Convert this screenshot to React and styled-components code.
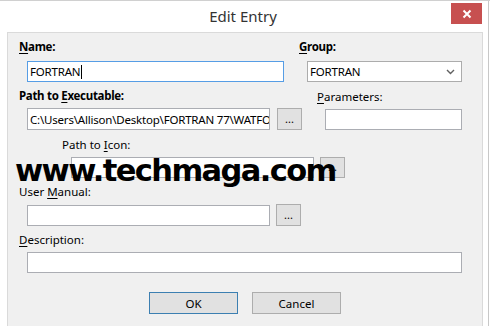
import React from "react";
import styled, { createGlobalStyle } from "styled-components";

const GlobalStyle = createGlobalStyle`
  * { box-sizing: border-box; }
  body {
    margin: 0;
    background: #ffffff;
    font-family: "Noto Sans", "Open Sans", sans-serif;
  }
`;

const Frame = styled.div`
  position: relative;
  width: 490px;
  height: 326px;
  overflow: hidden;
  background: #ffffff;
  border-top: 1px solid #d0d0d0;
`;

const EdgeLine = styled.div`
  position: absolute;
  top: 0;
  right: 1px;
  width: 1px;
  height: 326px;
  background: #c8c8c8;
`;

const TitleBar = styled.div`
  height: 31px;
  display: flex;
  align-items: center;
  justify-content: center;
  font-size: 15px;
  color: #333333;
  padding-bottom: 2px;
  padding-right: 4px;
`;

const CloseButton = styled.div`
  position: absolute;
  top: 2px;
  left: 451px;
  width: 31px;
  height: 21px;
  background: #c75050;
  display: flex;
  align-items: center;
  justify-content: center;
`;

const Panel = styled.div`
  margin-left: 7px;
  width: 476px;
  height: 300px;
  background: #f0f0f0;
  border: 1px solid #dadada;
  padding-left: 11px;
  font-size: 11.5px;
  color: #000;
`;

const Row = styled.div`
  display: flex;
  align-items: flex-start;
  margin-top: ${(p) => p.top || 0}px;
`;

const Column = styled.div`
  display: flex;
  flex-direction: column;
  width: ${(p) => (p.width ? `${p.width}px` : "auto")};
  padding-top: ${(p) => p.pad || 0}px;
`;

const Label = styled.div`
  height: 16px;
  line-height: 16px;
  font-weight: ${(p) => (p.bold ? 700 : 400)};
  margin-left: ${(p) => p.indent || 0}px;
  white-space: nowrap;
  letter-spacing: ${(p) => (p.bold ? "-0.3px" : "0")};
`;

const Key = styled.span`
  text-decoration: underline;
  text-underline-offset: 2px;
`;

const InputLine = styled.div`
  display: flex;
  align-items: flex-start;
  gap: ${(p) => p.gap || 0}px;
  margin-top: ${(p) => p.gap0 || 4}px;
  margin-left: ${(p) => p.indent || 8}px;
`;

const TextBox = styled.div`
  width: ${(p) => p.w}px;
  height: ${(p) => p.h || 21}px;
  background: #ffffff;
  border: 1px solid ${(p) => (p.focus ? "#569de5" : "#abadb3")};
  display: flex;
  align-items: center;
  padding-left: 2px;
  overflow: hidden;
  white-space: nowrap;
  font-size: 11.5px;
  letter-spacing: -0.2px;
`;

const Caret = styled.span`
  display: inline-block;
  width: 1px;
  height: 14px;
  background: #000;
  margin-left: 1px;
`;

const Select = styled(TextBox)`
  justify-content: space-between;
  padding-right: 6px;
  border-color: #acacac;
`;

const Browse = styled.div`
  width: 25px;
  height: ${(p) => p.h || 22}px;
  background: #e1e1e1;
  border: 1px solid #adadad;
  display: flex;
  align-items: center;
  justify-content: center;
  font-size: 11px;
  padding-bottom: 2px;
  margin-top: ${(p) => p.top || 0}px;
`;

const ButtonBar = styled.div`
  display: flex;
  justify-content: center;
  gap: 14px;
  margin-top: 19px;
  margin-left: -11px;
`;

const DialogButton = styled.div`
  width: 89px;
  height: 22px;
  background: #e1e1e1;
  border: 1px solid ${(p) => (p.primary ? "#3c7fb1" : "#adadad")};
  display: flex;
  align-items: center;
  justify-content: center;
  font-size: 11.5px;
`;

const Watermark = styled.div`
  position: absolute;
  left: 15px;
  top: 150px;
  font-family: "DejaVu Sans", Verdana, sans-serif;
  font-weight: 700;
  font-size: 30.5px;
  letter-spacing: -1.6px;
  color: #000;
  line-height: 40px;
  white-space: nowrap;
`;

const Chevron = () => (
  <svg width="9" height="6" viewBox="0 0 9 6">
    <path d="M1 1 L4.5 4.5 L8 1" fill="none" stroke="#606060" strokeWidth="1.4" />
  </svg>
);

const CloseIcon = () => (
  <svg width="10" height="10" viewBox="0 0 10 10">
    <path d="M1.5 1.5 L8.5 8.5 M8.5 1.5 L1.5 8.5" stroke="#fff" strokeWidth="2" />
  </svg>
);

export default function App() {
  return (
    <>
      <GlobalStyle />
      <Frame>
        <TitleBar>Edit Entry</TitleBar>
        <CloseButton>
          <CloseIcon />
        </CloseButton>
        <EdgeLine />
        <Panel>
          <Row top={6}>
            <Column width={280}>
              <Label bold>
                <Key>N</Key>ame:
              </Label>
              <InputLine gap0={6}>
                <TextBox w={257} h={21} focus>
                  FORTRAN
                  <Caret />
                </TextBox>
              </InputLine>
            </Column>
            <Column>
              <Label bold>
                <Key>G</Key>roup:
              </Label>
              <InputLine gap0={6}>
                <Select w={155} h={21}>
                  FORTRAN
                  <Chevron />
                </Select>
              </InputLine>
            </Column>
          </Row>

          <Row top={6}>
            <Column width={298}>
              <Label bold>
                Path to <Key>E</Key>xecutable:
              </Label>
              <InputLine gap={7}>
                <TextBox w={243} h={22}>
                  C:\Users\Allison\Desktop\FORTRAN 77\WATFOR77
                </TextBox>
                <Browse>...</Browse>
              </InputLine>
            </Column>
            <Column pad={1}>
              <Label>
                <Key>P</Key>arameters:
              </Label>
              <InputLine gap0={4}>
                <TextBox w={137} h={21} />
              </InputLine>
            </Column>
          </Row>

          <Row top={7}>
            <Column>
              <Label indent={43}>
                Path to <Key>I</Key>con:
              </Label>
              <InputLine gap={6} indent={52}>
                <TextBox w={243} h={21} />
                <Browse h={21}>...</Browse>
              </InputLine>
            </Column>
          </Row>

          <Row top={6}>
            <Column>
              <Label>
                User <Key>M</Key>anual:
              </Label>
              <InputLine gap={6} gap0={5}>
                <TextBox w={243} h={21} />
                <Browse h={22} top={-1}>
                  ...
                </Browse>
              </InputLine>
            </Column>
          </Row>

          <Row top={6}>
            <Column>
              <Label>
                <Key>D</Key>escription:
              </Label>
              <InputLine gap0={4}>
                <TextBox w={435} h={21} />
              </InputLine>
            </Column>
          </Row>

          <ButtonBar>
            <DialogButton primary>OK</DialogButton>
            <DialogButton>Cancel</DialogButton>
          </ButtonBar>
        </Panel>
        <Watermark>www.techmaga.com</Watermark>
      </Frame>
    </>
  );
}
